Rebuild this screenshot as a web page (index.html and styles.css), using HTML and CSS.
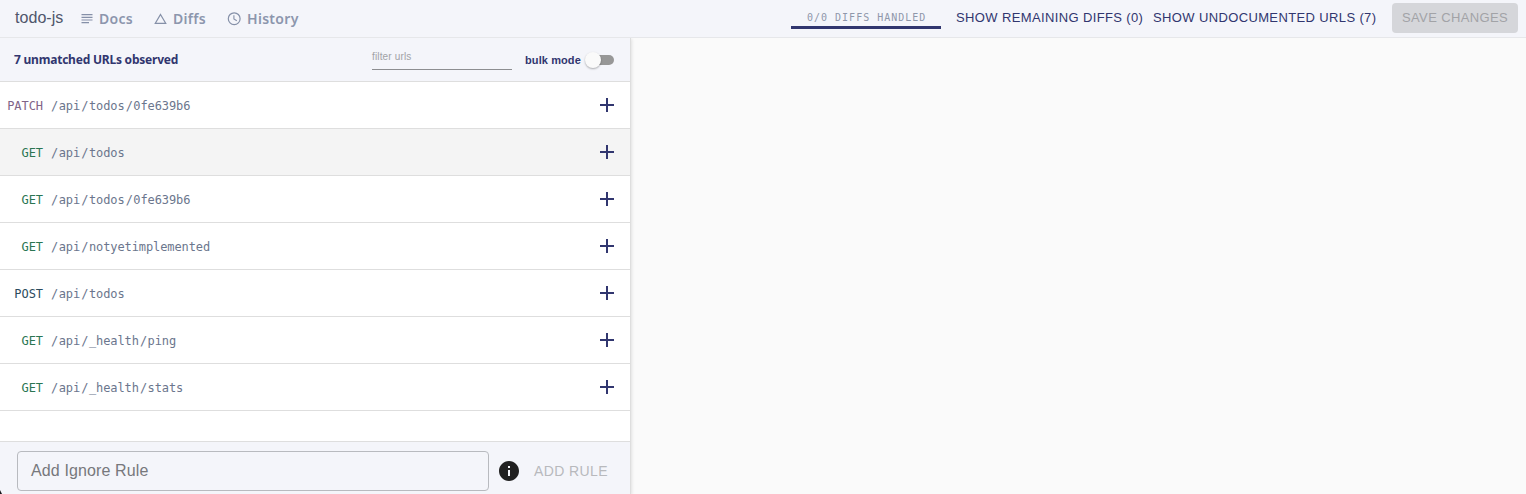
FILE: index.html
```html
<!DOCTYPE html>
<html lang="en">
<head>
<meta charset="utf-8">
<title>todo-js</title>
<link rel="stylesheet" href="styles.css">
</head>
<body>
<svg class="defs" width="0" height="0"><symbol id="plus" viewBox="0 0 24 24"><path d="M19 13h-6v6h-2v-6H5v-2h6V5h2v6h6v2z"/></symbol></svg>
<header class="topbar">
  <div class="project">todo-js</div>
  <nav class="nav">
    <a class="nav-item docs"><svg width="12" height="12" viewBox="0 0 12 12"><path d="M.5 1.6h11M.5 4.3h11M.5 7h11M.5 9.7h7.5" stroke-width="1.2"/></svg><span>Docs</span></a>
    <a class="nav-item diffs"><svg width="13" height="12" viewBox="0 0 13 12"><path d="M6.5 1.5L11.7 10.3H1.3Z" stroke-width="1.25"/></svg><span>Diffs</span></a>
    <a class="nav-item history"><svg width="14" height="14" viewBox="0 0 14 14"><circle cx="7.2" cy="6.7" r="5.9" stroke-width="1.2"/><path d="M6.9 3.2V6.9L9.8 8.7" stroke-width="1.1"/></svg><span>History</span></a>
  </nav>
  <div class="actions">
    <div class="progress"><span>0/0 DIFFS HANDLED</span></div>
    <button class="link remaining"><span>SHOW REMAINING DIFFS (0)</span></button>
    <button class="link undocumented"><span>SHOW UNDOCUMENTED URLS (7)</span></button>
    <button class="save"><span>SAVE CHANGES</span></button>
  </div>
</header>
<main class="panel">
  <div class="panel-head">
    <h1><span>7 unmatched URLs observed</span></h1>
    <div class="filter"><span>filter urls</span></div>
    <div class="bulk"><span>bulk mode</span></div>
    <div class="switch"><i class="track"></i><i class="thumb"></i></div>
  </div>
  <ul class="urls">
    <li><b class="method patch">PATCH</b><span class="path"><i>/</i><span>api</span><i>/</i><span>todos</span><i>/</i><span>0fe639b6</span></span><svg class="add"><use href="#plus"/></svg></li>
    <li class="active"><b class="method get">GET</b><span class="path"><i>/</i><span>api</span><i>/</i><span>todos</span></span><svg class="add"><use href="#plus"/></svg></li>
    <li><b class="method get">GET</b><span class="path"><i>/</i><span>api</span><i>/</i><span>todos</span><i>/</i><span>0fe639b6</span></span><svg class="add"><use href="#plus"/></svg></li>
    <li><b class="method get">GET</b><span class="path"><i>/</i><span>api</span><i>/</i><span>notyetimplemented</span></span><svg class="add"><use href="#plus"/></svg></li>
    <li><b class="method post">POST</b><span class="path"><i>/</i><span>api</span><i>/</i><span>todos</span></span><svg class="add"><use href="#plus"/></svg></li>
    <li><b class="method get">GET</b><span class="path"><i>/</i><span>api</span><i>/</i><span>_health</span><i>/</i><span>ping</span></span><svg class="add"><use href="#plus"/></svg></li>
    <li><b class="method get">GET</b><span class="path"><i>/</i><span>api</span><i>/</i><span>_health</span><i>/</i><span>stats</span></span><svg class="add"><use href="#plus"/></svg></li>
  </ul>
  <footer class="ignore">
    <div class="ignore-input">Add Ignore Rule</div>
    <svg class="info" width="24" height="24" viewBox="0 0 24 24"><path d="M12 2C6.48 2 2 6.48 2 12s4.48 10 10 10 10-4.48 10-10S17.52 2 12 2zm1 15h-2v-6h2v6zm0-8h-2V7h2v2z"/></svg>
    <button class="add-rule">ADD RULE</button>
  </footer>
</main>
<i class="corner"></i>
</body>
</html>
```
FILE: styles.css
```css
* { box-sizing: border-box; }
body { margin: 0; width: 1526px; height: 494px; overflow: hidden; background: #fafafa; font-family: "Liberation Sans", Arial, sans-serif; }
button { border: 0; padding: 0; background: none; font: inherit; text-align: left; white-space: nowrap; }
i { font-style: normal; }
.defs { display: block; }
.topbar { height: 38px; display: flex; background: #f4f5fa; border-bottom: 1px solid #e6e7ea; }
.project { width: 65px; margin-left: 15px; font-size: 16px; line-height: 36px; color: #4f566b; letter-spacing: .05px; }
.nav { width: 711px; display: flex; font-family: "Noto Sans", sans-serif; font-weight: 600; font-size: 14px; line-height: 37px; letter-spacing: .3px; color: #8c96ad; }
.nav-item { display: flex; align-items: center; white-space: nowrap; }
.nav-item svg { fill: none; stroke: #8590a8; flex: none; }
.docs { width: 73px; padding-left: 1px; gap: 6px; }
.diffs { width: 74px; padding-left: 1px; gap: 6px; }
.history { gap: 6px; }
.actions { display: flex; }
.progress { width: 150px; height: 29px; border-bottom: 3px solid #31366f; padding-left: 16px; font: 10px/35px "DejaVu Sans Mono", monospace; letter-spacing: 1px; color: #8f97aa; white-space: nowrap; }
.link { height: 35px; font-size: 13px; line-height: 35px; letter-spacing: .37px; color: #31366f; }
.remaining { margin-left: 15px; width: 197px; }
.undocumented { width: 239px; }
.save { width: 126px; height: 30px; margin-top: 3px; border-radius: 4px; padding: 0 0 1px 10px; background: #d5d6da; color: #a2a3a7; font-size: 13px; line-height: 28px; letter-spacing: .37px; }
.panel { width: 631px; height: 456px; display: flex; flex-direction: column; background: #fff; border-right: 1px solid #dedede; box-shadow: 1px 1px 3px rgba(0,0,0,.1); clip-path: inset(0 -8px 0 0); }
.panel-head { height: 44px; display: flex; background: #f4f5fa; border-bottom: 1px solid #dedede; }
h1 { width: 358px; margin: 0 0 0 14px; font: 700 12px/43px "Noto Sans", sans-serif; letter-spacing: -.22px; color: #31366f; white-space: nowrap; }
.filter { width: 140px; height: 32px; border-bottom: 1px solid #8d8e91; font-size: 10px; line-height: 38px; color: #a1a2a6; letter-spacing: .15px; }
.bulk { width: 61px; margin-left: 13px; font-size: 11px; line-height: 45px; font-weight: 700; letter-spacing: .1px; color: #31366f; white-space: nowrap; }
.switch { position: relative; width: 29px; height: 20px; margin-top: 12px; }
.track { position: absolute; left: 3px; top: 5px; width: 25px; height: 10px; border-radius: 5px; background: #979797; }
.thumb { position: absolute; left: -1px; top: 2px; width: 16px; height: 16px; border-radius: 50%; background: #fafafa; box-shadow: 0 1px 2px rgba(0,0,0,.3); }
.urls { height: 359px; margin: 0; padding: 0; list-style: none; }
.urls li { height: 47px; display: flex; align-items: center; border-bottom: 1px solid #dedede; font: 12px/44px "DejaVu Sans Mono", monospace; }
.urls .active { background: #f4f4f4; }
.method { width: 43px; padding-top: 2px; text-align: right; font-weight: 400; letter-spacing: -.05px; }
.patch { color: #806487; }
.get { color: #2b7552; }
.post { color: #2c4b5d; }
.path { display: flex; margin-left: 8px; padding-top: 2px; color: #6b768d; letter-spacing: -.1px; }
.path i { margin-right: .6px; }
.path span { margin-right: 1.1px; }
.add { width: 24px; height: 24px; margin-left: auto; margin-right: 11px; fill: #31366f; }
.ignore { height: 53px; display: flex; background: #f4f5fa; border-top: 1px solid #dedede; }
.ignore-input { width: 472px; height: 40px; margin: 9px 8px 0 17px; padding-left: 13px; border: 1px solid #b8babf; border-radius: 4px; font-size: 16px; line-height: 37px; letter-spacing: .12px; color: #77787c; }
.info { margin-top: 17px; fill: #202020; }
.add-rule { height: 40px; margin: 9px 0 0 13px; font-size: 14px; line-height: 40px; letter-spacing: .4px; color: #b8b9bd; }
.corner { position: absolute; left: 0; bottom: 0; width: 2px; height: 4px; background: #17181c; clip-path: polygon(0 0, 100% 100%, 0 100%); }
```
